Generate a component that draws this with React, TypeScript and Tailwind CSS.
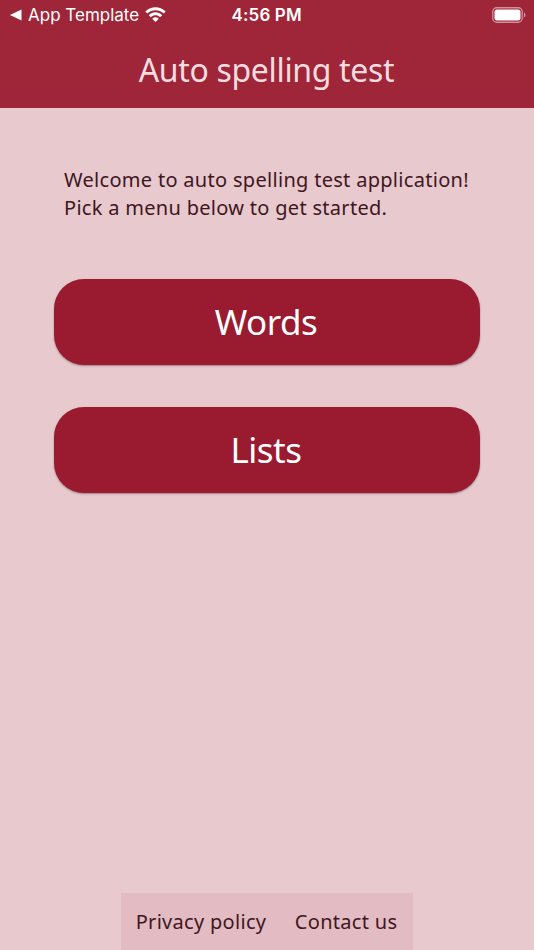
function StatusBar() {
  return (
    <div className="relative flex h-[30px] items-center justify-between pl-[10px] pr-[8px] font-['Inter',sans-serif] text-white">
      <div className="flex items-center">
        <svg width="12" height="12" viewBox="0 0 12 12" fill="currentColor">
          <path d="M0 6 11.5 0.5v11z" />
        </svg>
        <span className="ml-[6px] text-[17px] leading-[30px]">App Template</span>
        <svg className="ml-[6px]" width="21" height="16" viewBox="0 0 21 16" fill="currentColor">
          <path d="M10.5 3.2c3 0 5.8 1.15 7.9 3.15.15.15.4.15.55 0l1.5-1.55c.15-.15.15-.4 0-.55C14.9-1.1 6.1-1.1.55 4.25c-.15.15-.15.4 0 .55l1.5 1.55c.15.15.4.15.55 0C4.7 4.35 7.5 3.2 10.5 3.2z" />
          <path d="M10.5 8.3c1.65 0 3.2.6 4.4 1.7.15.15.4.15.55 0l1.55-1.55c.15-.15.15-.4 0-.55-3.65-3.45-9.35-3.45-13 0-.15.15-.15.4 0 .55L5.55 10c.15.15.4.15.55 0 1.2-1.1 2.75-1.7 4.4-1.7z" />
          <path d="M13.5 11.45c.15.15.15.4 0 .55l-2.7 2.75c-.15.15-.4.15-.55 0L7.5 12c-.15-.15-.15-.4 0-.55 1.7-1.45 4.3-1.45 6 0z" />
        </svg>
      </div>
      <span className="absolute left-[231.5px] text-[17px] font-semibold leading-[30px] tracking-[0.15px]">4:56 PM</span>
      <svg width="34" height="16" viewBox="0 0 34 16" fill="none">
        <rect x="0.75" y="0.75" width="29.5" height="14.5" rx="4" stroke="white" strokeOpacity="0.5" strokeWidth="1.3" />
        <rect x="2.5" y="2.5" width="26" height="11" rx="2.5" fill="white" />
        <path d="M32 5.5v5c2-.9 2-4.1 0-5z" fill="white" fillOpacity="0.5" />
      </svg>
    </div>
  );
}

function MenuButton({ label }: { label: string }) {
  return (
    <button className="h-[85.4px] w-full rounded-[30px] bg-[#9a1b2f] pr-[2px] text-[35px] tracking-[-0.5px] text-white shadow-[0_1px_2px_rgba(0,0,0,0.35)]">
      {label}
    </button>
  );
}

export default function App() {
  return (
    <div className="flex h-screen flex-col bg-[#e7c9ce] font-['Noto_Sans',sans-serif] text-[#40161f]">
      <header className="h-[108px] bg-[#9f2538]">
        <StatusBar />
        <h1 className="pr-[1px] text-center text-[32px] leading-[80px] tracking-[-0.33px] text-[#f3dce0]">Auto spelling test</h1>
      </header>
      <main className="flex-1 px-[54px] pt-[58px]">
        <p className="whitespace-nowrap pl-[10px] text-[20px] leading-[28px] tracking-[0.3px]">
          Welcome to auto spelling test application!
          <br />
          Pick a menu below to get started.
        </p>
        <div className="mt-[57.4px] flex flex-col gap-[42.6px]">
          <MenuButton label="Words" />
          <MenuButton label="Lists" />
        </div>
      </main>
      <footer className="mx-auto flex h-[57px] w-[292px] items-center justify-center gap-[28.5px] whitespace-nowrap bg-[#e2bcc2] pr-[1px] text-[20px] tracking-[0.3px]">
        <a href="#">Privacy policy</a>
        <a href="#">Contact us</a>
      </footer>
    </div>
  );
}
